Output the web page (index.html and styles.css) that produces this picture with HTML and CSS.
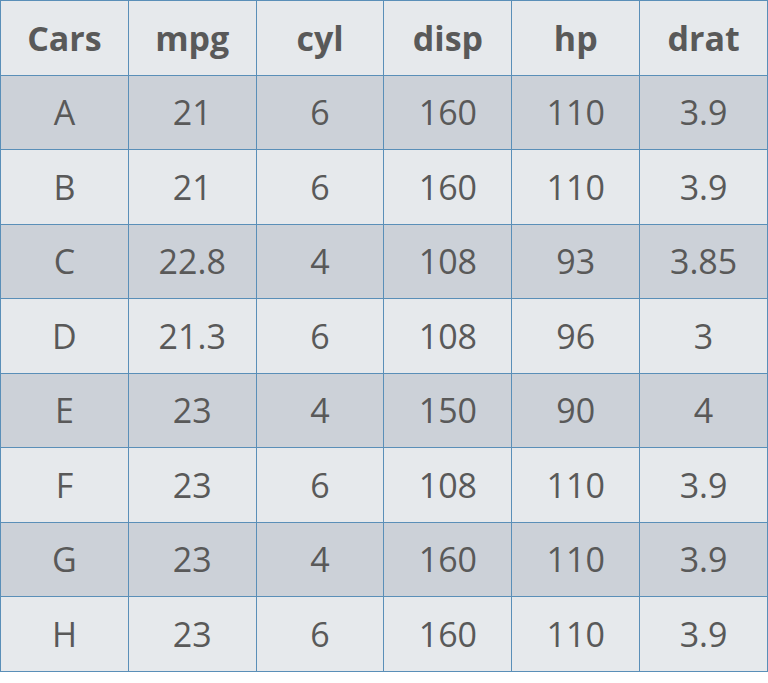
FILE: index.html
```html
<!DOCTYPE html>
<html>
<head>
<meta charset="utf-8">
<link rel="stylesheet" href="styles.css">
</head>
<body>
<table class="cars">
  <thead>
    <tr><th>Cars</th><th>mpg</th><th>cyl</th><th>disp</th><th>hp</th><th>drat</th></tr>
  </thead>
  <tbody>
    <tr class="dark"><td>A</td><td>21</td><td>6</td><td>160</td><td>110</td><td>3.9</td></tr>
    <tr class="light"><td>B</td><td>21</td><td>6</td><td>160</td><td>110</td><td>3.9</td></tr>
    <tr class="dark"><td>C</td><td>22.8</td><td>4</td><td>108</td><td>93</td><td>3.85</td></tr>
    <tr class="light"><td>D</td><td>21.3</td><td>6</td><td>108</td><td>96</td><td>3</td></tr>
    <tr class="dark"><td>E</td><td>23</td><td>4</td><td>150</td><td>90</td><td>4</td></tr>
    <tr class="light"><td>F</td><td>23</td><td>6</td><td>108</td><td>110</td><td>3.9</td></tr>
    <tr class="dark"><td>G</td><td>23</td><td>4</td><td>160</td><td>110</td><td>3.9</td></tr>
    <tr class="light"><td>H</td><td>23</td><td>6</td><td>160</td><td>110</td><td>3.9</td></tr>
  </tbody>
</table>
</body>
</html>
```

FILE: styles.css
```css
html, body {
  margin: 0;
  padding: 0;
  background: #ffffff;
}

.cars {
  border-collapse: collapse;
  table-layout: fixed;
  width: 768px;
  font-family: "Open Sans", "Noto Sans", sans-serif;
  font-size: 34px;
  color: #595959;
}

.cars th,
.cars td {
  border: 1px solid #5a8fb8;
  height: 73.5px;
  padding: 0;
  text-align: center;
  vertical-align: middle;
  line-height: 1;
}

.cars th {
  font-weight: 700;
  background: #e6e9ec;
}

.cars td {
  font-weight: 400;
}

.cars .dark td {
  background: #ccd1d8;
}

.cars .light td {
  background: #e6e9ec;
}
```
